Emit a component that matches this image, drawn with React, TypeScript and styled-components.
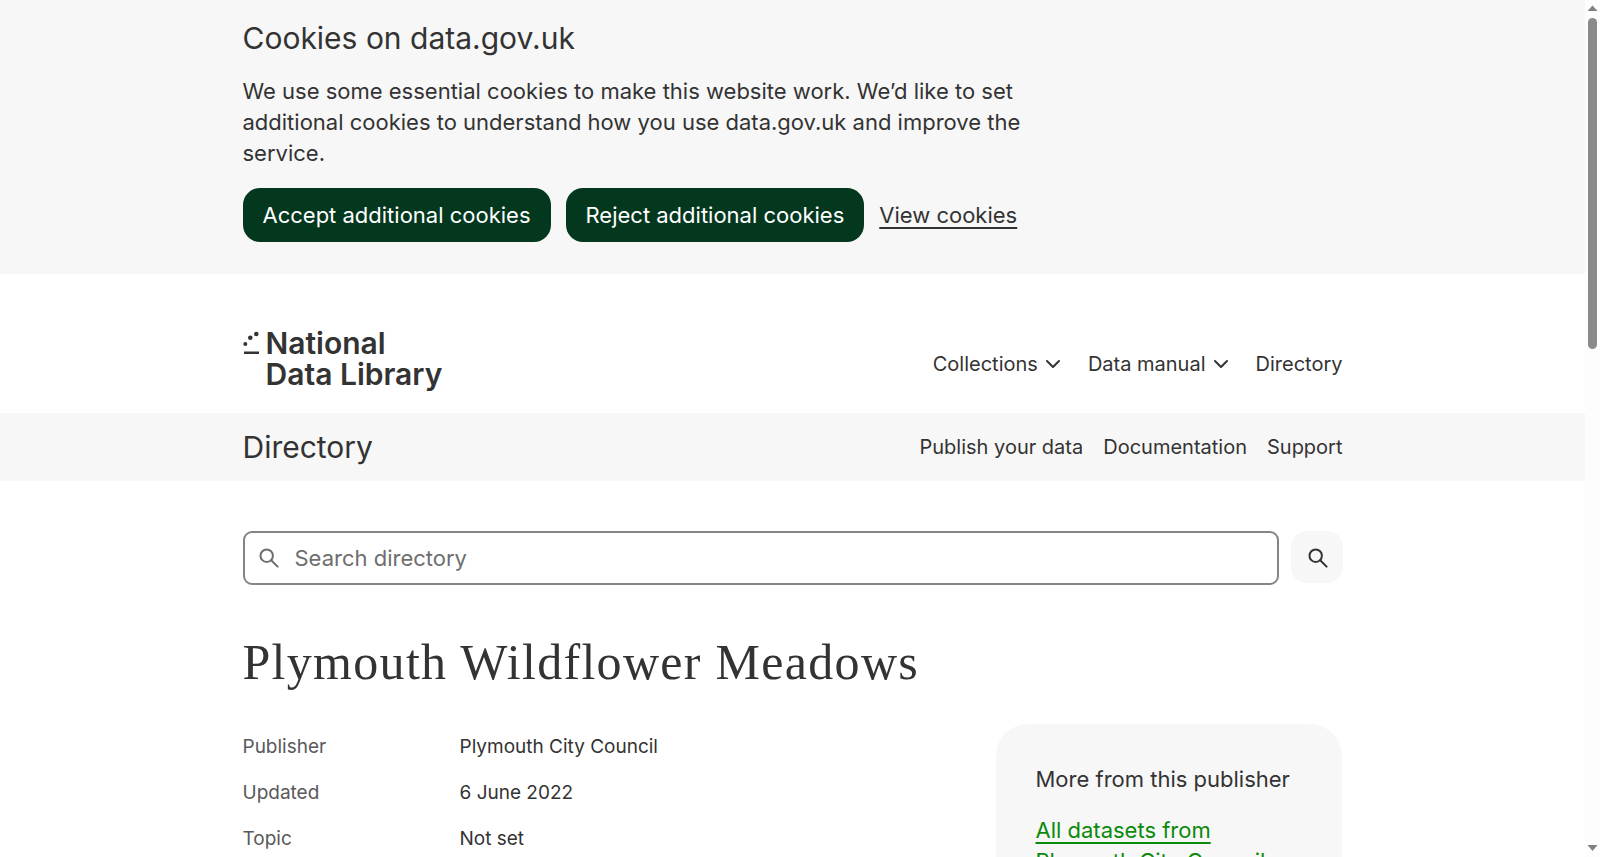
import React from "react";
import styled, { createGlobalStyle } from "styled-components";
import { ChevronDown } from "lucide-react";

const GlobalStyle = createGlobalStyle`
  body {
    margin: 0;
    background: #fff;
    color: #333;
    font-family: Inter, "Liberation Sans", sans-serif;
  }
  * {
    box-sizing: border-box;
  }
`;

const Frame = styled.div`
  display: flex;
  height: 100vh;
  overflow: hidden;
`;
const PageArea = styled.div`
  flex: 1;
  min-width: 0;
`;
const ScrollTrack = styled.div`
  width: 15px;
  display: flex;
  flex-direction: column;
  align-items: center;
  background: #fdfdfd;
`;
const Arrow = styled.svg`
  flex: none;
  width: 15px;
  height: 18px;
  fill: #808080;
`;
const ScrollThumb = styled.div`
  width: 9px;
  height: 331px;
  border-radius: 5px;
  background: #8a8a8a;
`;
const ScrollGap = styled.div`
  flex: 1;
`;

const Wrap = styled.div`
  width: 1100px;
  margin: 0 auto;
`;

const CookieBanner = styled.section`
  background: #f7f7f7;
  height: 274px;
  padding-top: 20px;
`;
const CookieTitle = styled.h2`
  margin: 0;
  font-size: 30px;
  line-height: 36px;
  font-weight: 400;
`;
const CookieText = styled.p`
  margin: 20px 0 0;
  width: 790px;
  font-size: 22px;
  line-height: 31px;
`;
const CookieActions = styled.div`
  display: flex;
  align-items: center;
  gap: 15px;
  margin-top: 19px;
`;
const PillButton = styled.button`
  height: 54px;
  padding: 0 20px;
  border: 0;
  border-radius: 17px;
  background: #03381f;
  color: #fff;
  font: 400 22px Inter, sans-serif;
`;
const PlainLink = styled.a`
  color: #333;
  font-size: 22px;
  text-decoration: underline;
  text-underline-offset: 4px;
`;

const Header = styled.header`
  height: 139px;
`;
const HeaderRow = styled(Wrap)`
  display: flex;
  justify-content: space-between;
  padding-top: 54px;
`;
const Logo = styled.div`
  display: flex;
  gap: 7px;
`;
const LogoMarkSvg = styled.svg`
  flex: none;
  margin-top: 3px;
  fill: #333;
`;
const LogoName = styled.div`
  font-size: 30px;
  line-height: 31px;
  font-weight: 600;
`;
const MainNav = styled.nav`
  display: flex;
  align-items: center;
  gap: 22.5px;
  height: 64px;
  padding-top: 8px;
  font-size: 20px;
`;
const NavItem = styled.span`
  display: flex;
  align-items: center;
  gap: 3.5px;
`;

const SubBand = styled.div`
  background: #f7f7f7;
  height: 68px;
`;
const SubRow = styled(Wrap)`
  display: flex;
  align-items: center;
  justify-content: space-between;
  height: 100%;
`;
const SubTitle = styled.div`
  font-size: 30px;
`;
const SubNav = styled.nav`
  display: flex;
  gap: 20px;
  font-size: 20px;
`;

const Main = styled(Wrap)`
  padding-top: 50px;
`;
const SearchRow = styled.form`
  display: flex;
  gap: 12px;
`;
const SearchField = styled.div`
  flex: 1;
  display: flex;
  align-items: center;
  gap: 16px;
  height: 54px;
  padding: 0 14px;
  border: 2px solid #858585;
  border-radius: 9px;
  color: #6e6e6e;
  font-size: 22px;
`;
const SearchButton = styled.button`
  width: 52px;
  height: 52px;
  display: flex;
  align-items: center;
  justify-content: center;
  padding: 2px 0 0 2px;
  border: 0;
  border-radius: 16px;
  background: #f7f7f7;
  color: #333;
`;
const PageTitle = styled.h1`
  margin: 47px 0 0;
  font-family: "Liberation Serif", serif;
  font-size: 50px;
  line-height: 60px;
  font-weight: 400;
  letter-spacing: 1.3px;
`;
const Columns = styled.div`
  display: flex;
  justify-content: space-between;
  margin-top: 32px;
`;
const MetaList = styled.dl`
  margin: 11px 0 0;
  display: grid;
  grid-template-columns: 217px 1fr;
  row-gap: 22px;
  align-content: start;
  font-size: 19px;
  line-height: 24px;
`;
const MetaLabel = styled.dt`
  color: #595959;
`;
const MetaValue = styled.dd`
  margin: 0;
`;
const Card = styled.aside`
  width: 346px;
  margin-right: 1px;
  padding: 40px;
  border-radius: 32px;
  background: #f7f7f7;
`;
const CardTitle = styled.div`
  font-size: 22px;
  line-height: 30px;
`;
const CardLink = styled.a`
  display: block;
  margin-top: 21px;
  color: #0b8a0b;
  font-size: 22px;
  line-height: 31px;
  text-decoration: underline;
  text-decoration-thickness: 2px;
  text-underline-offset: 4px;
`;

const LogoMark = () => (
  <LogoMarkSvg width="16" height="24" viewBox="0 0 16 24">
    <circle cx="13.3" cy="3" r="2.3" />
    <circle cx="7.3" cy="6.7" r="2.3" />
    <circle cx="2.3" cy="13" r="2" />
    <rect x="1" y="20.5" width="15" height="2.5" />
  </LogoMarkSvg>
);

const SearchGlyph = () => (
  <svg width="20" height="20" viewBox="0 0 20 20" fill="none" stroke="currentColor" strokeWidth="2" strokeLinecap="round">
    <circle cx="7.7" cy="7.7" r="6.2" />
    <line x1="12.2" y1="12.2" x2="18.6" y2="18.6" />
  </svg>
);

export default function App() {
  return (
    <Frame>
      <GlobalStyle />
      <PageArea>
        <CookieBanner>
          <Wrap>
            <CookieTitle>Cookies on data.gov.uk</CookieTitle>
            <CookieText>
              We use some essential cookies to make this website work. We’d like to set additional cookies to understand how you use data.gov.uk and improve the service.
            </CookieText>
            <CookieActions>
              <PillButton>Accept additional cookies</PillButton>
              <PillButton>Reject additional cookies</PillButton>
              <PlainLink href="#">View cookies</PlainLink>
            </CookieActions>
          </Wrap>
        </CookieBanner>
        <Header>
          <HeaderRow>
            <Logo>
              <LogoMark />
              <LogoName>
                National
                <br />
                Data Library
              </LogoName>
            </Logo>
            <MainNav>
              <NavItem>
                Collections <ChevronDown size={24} />
              </NavItem>
              <NavItem>
                Data manual <ChevronDown size={24} />
              </NavItem>
              <NavItem>Directory</NavItem>
            </MainNav>
          </HeaderRow>
        </Header>
        <SubBand>
          <SubRow>
            <SubTitle>Directory</SubTitle>
            <SubNav>
              <span>Publish your data</span>
              <span>Documentation</span>
              <span>Support</span>
            </SubNav>
          </SubRow>
        </SubBand>
        <Main>
          <SearchRow>
            <SearchField>
              <SearchGlyph />
              Search directory
            </SearchField>
            <SearchButton type="button">
              <SearchGlyph />
            </SearchButton>
          </SearchRow>
          <PageTitle>Plymouth Wildflower Meadows</PageTitle>
          <Columns>
            <MetaList>
              <MetaLabel>Publisher</MetaLabel>
              <MetaValue>Plymouth City Council</MetaValue>
              <MetaLabel>Updated</MetaLabel>
              <MetaValue>6 June 2022</MetaValue>
              <MetaLabel>Topic</MetaLabel>
              <MetaValue>Not set</MetaValue>
            </MetaList>
            <Card>
              <CardTitle>More from this publisher</CardTitle>
              <CardLink href="#">All datasets from Plymouth City Council</CardLink>
            </Card>
          </Columns>
        </Main>
      </PageArea>
      <ScrollTrack>
        <Arrow viewBox="0 0 15 18">
          <polygon points="7.5,5.5 12.5,11 2.5,11" />
        </Arrow>
        <ScrollThumb />
        <ScrollGap />
        <Arrow viewBox="0 0 15 18">
          <polygon points="2.5,6 12.5,6 7.5,12" />
        </Arrow>
      </ScrollTrack>
    </Frame>
  );
}
